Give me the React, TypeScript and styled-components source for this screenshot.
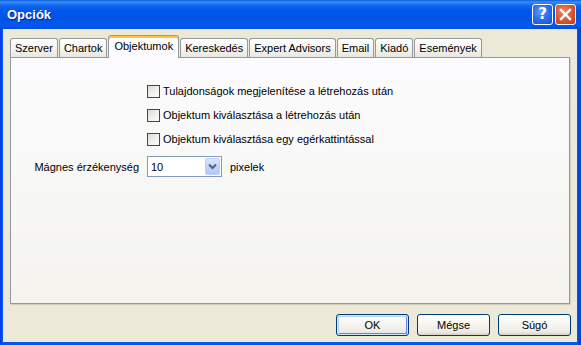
import React, { useState } from 'react';
import styled, { createGlobalStyle } from 'styled-components';

const GlobalStyle = createGlobalStyle`
  html, body {
    margin: 0;
    padding: 0;
    background: #ece9d8;
  }
  body {
    font-family: 'Liberation Sans', Arial, sans-serif;
    font-size: 11px;
    color: #000;
  }
`;

const Window = styled.div`
  width: 581px;
  height: 345px;
  display: flex;
  flex-direction: column;
  background: linear-gradient(to right, #0831d9 0px, #0058ee 2px, #0058ee 577px, #0040d8 580px);
  box-sizing: border-box;
`;

const TitleBar = styled.div`
  height: 29px;
  flex: none;
  display: flex;
  align-items: center;
  padding: 0 5px 0 7px;
  background: linear-gradient(
    to bottom,
    #0a5ed8 0%,
    #3b8dfb 7%,
    #1468ef 18%,
    #0058ee 35%,
    #0054e3 65%,
    #0059f2 88%,
    #004ad8 100%
  );
`;

const Title = styled.div`
  flex: 1;
  color: #fff;
  font-family: 'Liberation Sans', Arial, sans-serif;
  font-weight: bold;
  font-size: 13px;
  text-shadow: 1px 1px 0 #0a1e9e;
`;

const CaptionButton = styled.button<{ $kind: 'help' | 'close' }>`
  width: 21px;
  height: 21px;
  margin-left: 2px;
  padding: 0;
  border: 1px solid #fff;
  border-radius: 3px;
  display: flex;
  align-items: center;
  justify-content: center;
  color: #fff;
  font-family: 'DejaVu Sans', sans-serif;
  font-weight: bold;
  font-size: 15px;
  line-height: 1;
  background: ${(p) =>
    p.$kind === 'close'
      ? 'radial-gradient(circle at 40% 35%, #f08a6a 0%, #e25a33 45%, #c2391a 100%)'
      : 'radial-gradient(circle at 40% 35%, #5e9bff 0%, #2a6cf0 50%, #1a50d8 100%)'};
  box-shadow: inset 0 0 1px rgba(0, 0, 0, 0.3);
`;

const Body = styled.div`
  flex: 1;
  margin: 0 4px 3px 3px;
  background: #ece9d8;
  display: flex;
  flex-direction: column;
  padding: 6px 7px 6px 7px;
`;

const TabStrip = styled.div`
  display: flex;
  align-items: flex-end;
  height: 22px;
  position: relative;
  z-index: 1;
`;

const Tab = styled.div<{ $active?: boolean }>`
  box-sizing: border-box;
  height: ${(p) => (p.$active ? '23px' : '19px')};
  margin-bottom: ${(p) => (p.$active ? '-1px' : '0')};
  margin-right: 1px;
  padding: 0 ${(p) => (p.$active ? '5px' : '4px')};
  padding-top: ${(p) => (p.$active ? '4px' : '0')};
  display: flex;
  align-items: ${(p) => (p.$active ? 'flex-start' : 'center')};
  border: 1px solid #919b9c;
  border-bottom: none;
  border-top-color: ${(p) => (p.$active ? '#e68b2c' : '#919b9c')};
  border-radius: 3px 3px 0 0;
  background: ${(p) =>
    p.$active ? '#fcfcfe' : 'linear-gradient(to bottom, #ffffff 0%, #f3f3ef 60%, #e8e7e1 100%)'};
  box-shadow: ${(p) => (p.$active ? 'inset 0 2px 0 #ffc83c' : 'none')};
  white-space: nowrap;
`;

const Panel = styled.div`
  flex: 1;
  border: 1px solid #919b9c;
  box-shadow: 1px 1px 0 #d0cebf;
  background: linear-gradient(to bottom, #fcfcfe 0%, #f4f3ee 100%);
  display: grid;
  grid-template-columns: 128px auto;
  column-gap: 8px;
  align-content: start;
  padding-top: 22px;
`;

const CheckRow = styled.label`
  grid-column: 2;
  display: flex;
  align-items: center;
  height: 22px;
  margin-bottom: 2px;
  cursor: default;
`;

const CheckBox = styled.span`
  box-sizing: border-box;
  width: 13px;
  height: 13px;
  margin-right: 3px;
  border: 1px solid #1c5180;
  background: linear-gradient(135deg, #dcdcd7 0%, #f2f2ef 60%, #ffffff 100%);
  display: flex;
  align-items: center;
  justify-content: center;
  color: #21a121;
  font-size: 10px;
  font-weight: bold;
`;

const FieldLabel = styled.div`
  grid-column: 1;
  justify-self: end;
  align-self: center;
  margin-top: 4px;
`;

const FieldRow = styled.div`
  grid-column: 2;
  display: flex;
  align-items: center;
  margin-top: 4px;
`;

const Combo = styled.div`
  box-sizing: border-box;
  width: 75px;
  height: 21px;
  border: 1px solid #7f9db9;
  background: #fff;
  display: flex;
  align-items: center;
  padding: 1px;
`;

const ComboValue = styled.span`
  flex: 1;
  padding-left: 2px;
`;

const ComboArrow = styled.span`
  box-sizing: border-box;
  width: 15px;
  height: 17px;
  border: 1px solid #bccefa;
  border-radius: 2px;
  background: linear-gradient(to bottom, #dbe6fe 0%, #c4d5fc 50%, #b2c8f7 100%);
  display: flex;
  align-items: center;
  justify-content: center;
`;

const Unit = styled.span`
  margin-left: 8px;
`;

const ButtonRow = styled.div`
  display: flex;
  justify-content: flex-end;
  gap: 8px;
  margin-top: 10px;
  margin-right: -1px;
`;

const PushButton = styled.button<{ $default?: boolean }>`
  width: 73px;
  height: 22px;
  padding: 0;
  font-family: 'Liberation Sans', Arial, sans-serif;
  font-size: 11px;
  color: #000;
  border: 1px solid #003c74;
  border-radius: 3px;
  background: linear-gradient(to bottom, #ffffff 0%, #f5f4f0 50%, #ebeae3 85%, #d6d0c5 100%);
  box-shadow: ${(p) =>
    p.$default
      ? 'inset 0 0 0 1px #cee7ff, inset 1px 1px 0 1px #bcd4f6, inset -1px -1px 0 1px #6982ee'
      : 'none'};
`;

const options = [
  'Tulajdonságok megjelenítése a létrehozás után',
  'Objektum kiválasztása a létrehozás után',
  'Objektum kiválasztása egy egérkattintással',
];

const tabs = ['Szerver', 'Chartok', 'Objektumok', 'Kereskedés', 'Expert Advisors', 'Email', 'Kiadó', 'Események'];

const App = () => {
  const [checked, setChecked] = useState<boolean[]>([false, false, false]);

  const toggle = (i: number) => {
    const next = [...checked];
    next[i] = !next[i];
    setChecked(next);
  };

  return (
    <>
      <GlobalStyle />
      <Window>
        <TitleBar>
          <Title>Opciók</Title>
          <CaptionButton $kind='help'>?</CaptionButton>
          <CaptionButton $kind='close'>
            <svg width='13' height='13' viewBox='0 0 13 13'>
              <path d='M2 2 L11 11 M11 2 L2 11' stroke='#fff' strokeWidth='2.4' strokeLinecap='square' />
            </svg>
          </CaptionButton>
        </TitleBar>
        <Body>
          <TabStrip>
            {tabs.map((t) => (
              <Tab key={t} $active={t === 'Objektumok'}>
                {t}
              </Tab>
            ))}
          </TabStrip>
          <Panel>
            {options.map((o, i) => (
              <CheckRow key={o} onClick={() => toggle(i)}>
                <CheckBox>{checked[i] ? '✓' : ''}</CheckBox>
                {o}
              </CheckRow>
            ))}
            <FieldLabel>Mágnes érzékenység</FieldLabel>
            <FieldRow>
              <Combo>
                <ComboValue>10</ComboValue>
                <ComboArrow>
                  <svg width='9' height='7' viewBox='0 0 9 7'>
                    <path d='M1 1.5 L4.5 5 L8 1.5' fill='none' stroke='#4d6185' strokeWidth='2' />
                  </svg>
                </ComboArrow>
              </Combo>
              <Unit>pixelek</Unit>
            </FieldRow>
          </Panel>
          <ButtonRow>
            <PushButton $default>OK</PushButton>
            <PushButton>Mégse</PushButton>
            <PushButton>Súgó</PushButton>
          </ButtonRow>
        </Body>
      </Window>
    </>
  );
};

export default App;
